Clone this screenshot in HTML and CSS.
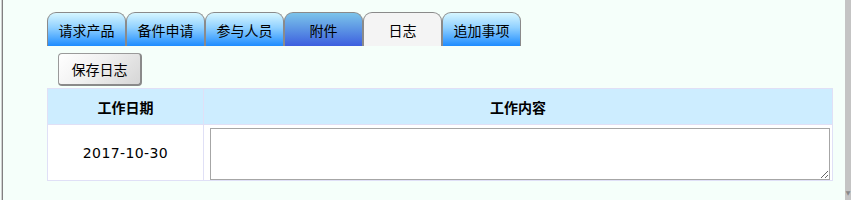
FILE: index.html
```html
<!DOCTYPE html>
<html lang="zh">
<head>
<meta charset="utf-8">
<title>日志</title>
<link rel="stylesheet" href="styles.css">
</head>
<body>
<div class="frame">
  <div class="edge-left"></div>
  <main class="content">
    <nav class="tabs">
      <div class="tab">请求产品</div>
      <div class="tab">备件申请</div>
      <div class="tab">参与人员</div>
      <div class="tab tab-hover">附件</div>
      <div class="tab tab-active">日志</div>
      <div class="tab">追加事项</div>
    </nav>
    <div class="toolbar">
      <button class="btn" type="button">保存日志</button>
    </div>
    <table class="log-table">
      <thead>
        <tr><th class="col-date">工作日期</th><th>工作内容</th></tr>
      </thead>
      <tbody>
        <tr>
          <td class="cell-date">2017-10-30</td>
          <td class="cell-text"><textarea class="log-input"></textarea></td>
        </tr>
      </tbody>
    </table>
  </main>
  <div class="edge-right"><span class="arrow">▼</span></div>
</div>
</body>
</html>
```
FILE: styles.css
```css
html, body {
  margin: 0;
  padding: 0;
  height: 100%;
  background: #f5fffa;
  font-family: "DejaVu Sans", "Noto Sans CJK SC", sans-serif;
  font-size: 14px;
  color: #000;
}
.frame {
  display: flex;
  height: 200px;
  overflow: hidden;
}
.edge-left {
  width: 1px;
  margin-left: 1px;
  border-left: 1px solid #d0d0d0;
  background: #808080;
  flex: none;
}
.edge-right {
  width: 6px;
  margin-left: auto;
  background: #c4c4c4;
  flex: none;
  display: flex;
  align-items: flex-end;
  justify-content: center;
}
.arrow {
  font-size: 6px;
  color: #888;
  line-height: 1;
  margin-bottom: 4px;
}
.content {
  padding: 12px 0 0 44px;
  width: 786px;
  flex: none;
}
.tabs {
  display: flex;
  height: 34px;
}
.tab {
  box-sizing: border-box;
  width: 79px;
  height: 34px;
  border: 1px solid #8a8a8a;
  border-bottom: none;
  border-radius: 9px 9px 0 0;
  background: linear-gradient(to bottom, #d6f6ff 0%, #8fd0ff 45%, #1e8cff 100%);
  display: flex;
  align-items: center;
  justify-content: center;
  font-family: "Noto Sans CJK SC", sans-serif;
  font-size: 14px;
  padding-top: 1px;
}
.tab-hover {
  background: linear-gradient(to bottom, #7cc4ea 0%, #5b93e4 50%, #3d5fdf 100%);
}
.tab-active {
  background: #f4f4f4;
}
.toolbar {
  padding: 7px 0 2px 11px;
}
.btn {
  box-sizing: border-box;
  width: 84px;
  height: 33px;
  border: 1px solid #9a9a9a;
  border-right: 2px solid #8a8a8a;
  border-bottom: 2px solid #8a8a8a;
  border-radius: 4px;
  background: linear-gradient(135deg, #ffffff 0%, #f0f0f0 45%, #d6d6d6 100%);
  font-family: "Noto Sans CJK SC", sans-serif;
  font-size: 14px;
  color: #000;
  padding: 0;
  display: block;
}
.log-table {
  width: 786px;
  border-collapse: collapse;
  border: 1px solid #e0e0f6;
  table-layout: fixed;
}
.log-table th {
  height: 35px;
  padding: 0;
  background: #cdedff;
  border: 1px solid #e0e0f6;
  font-family: "Noto Sans CJK SC", sans-serif;
  font-weight: bold;
  font-size: 14px;
}
.log-table .col-date {
  width: 155px;
}
.log-table td {
  background: #fff;
  border: 1px solid #e0e0f6;
  padding: 0;
  height: 55px;
}
.cell-date {
  text-align: center;
  font-family: "DejaVu Sans", sans-serif;
  font-size: 14px;
  letter-spacing: 0.4px;
  padding-left: 3px;
}
.cell-text {
  vertical-align: top;
}
.log-input {
  display: block;
  box-sizing: border-box;
  width: 620px;
  height: 52px;
  margin: 3px 0 0 6px;
  border: 1px solid #a6a6a6;
  background: #fff;
  resize: both;
  padding: 2px;
  font-family: "DejaVu Sans", sans-serif;
  font-size: 13px;
}
```
